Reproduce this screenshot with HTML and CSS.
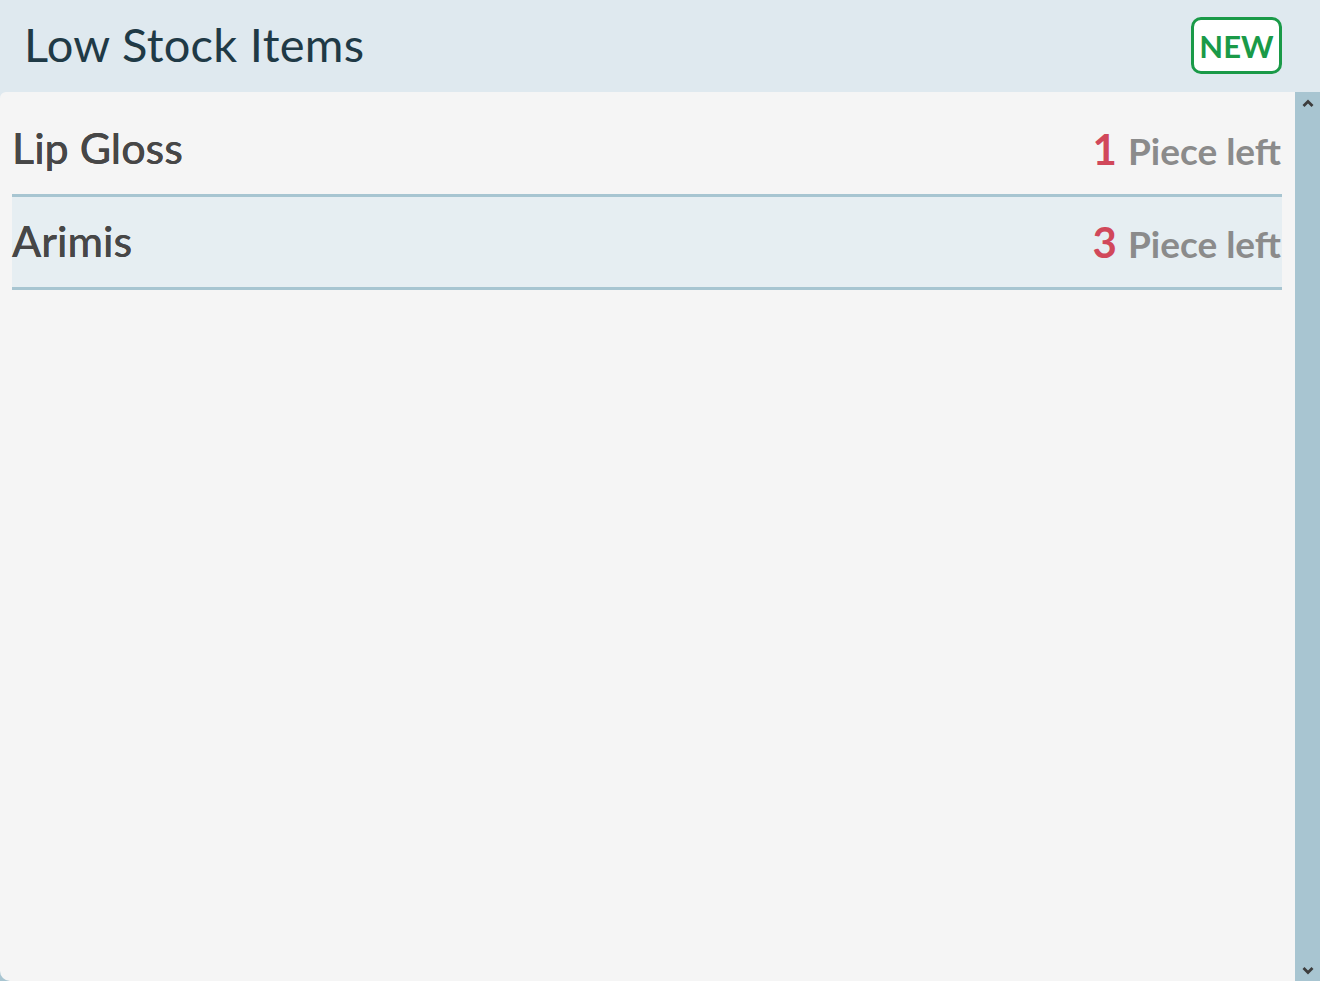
FILE: index.html
```html
<!DOCTYPE html>
<html>
<head>
<meta charset="utf-8">
<link rel="stylesheet" href="styles.css">
</head>
<body>
<div class="widget">
  <header class="head">
    <h1 class="title">Low Stock Items</h1>
    <span class="badge">NEW</span>
  </header>
  <div class="main">
    <div class="panel">
      <ul class="list">
        <li class="row">
          <span class="name">Lip Gloss</span>
          <span class="qty"><span class="num">1</span> Piece left</span>
        </li>
        <li class="row alt">
          <span class="name">Arimis</span>
          <span class="qty"><span class="num">3</span> Piece left</span>
        </li>
      </ul>
    </div>
    <div class="scroll">
      <svg class="arrow" width="12" height="8" viewBox="0 0 12 8"><path d="M1.5 7 L6 2.5 L10.5 7" fill="none" stroke="#3d3d3d" stroke-width="2.8"/></svg>
      <svg class="arrow" width="12" height="8" viewBox="0 0 12 8"><path d="M1.5 1 L6 5.5 L10.5 1" fill="none" stroke="#3d3d3d" stroke-width="2.8"/></svg>
    </div>
  </div>
</div>
</body>
</html>
```
FILE: styles.css
```css
* { box-sizing: border-box; }
html, body { margin: 0; padding: 0; height: 100%; }
body { background: #a8c5d1; font-family: "Lato", "Noto Sans", sans-serif; overflow: hidden; }
.widget { display: flex; flex-direction: column; height: 981px; width: 1320px; }
.head {
  height: 92px; background: #dfe9ef; display: flex; align-items: center;
  justify-content: space-between; padding: 0 38px 0 24px; flex-shrink: 0;
}
.title { margin: 0; font-size: 47px; font-weight: 400; color: #1f3a46; letter-spacing: 0.3px; margin-top: -4px; }
.badge {
  width: 91px; height: 57px; border: 3px solid #1a9a48; border-radius: 10px; background: #fff;
  color: #1a9a48; font-weight: 700; font-size: 31px; display: flex; align-items: center; justify-content: center;
  margin-top: -1px;
}
.main { flex: 1; display: flex; background: linear-gradient(#dfe9ef 10px, #a8c5d1 10px); }
.panel { flex: 1; background: #f5f5f5; border-radius: 6px 0 0 10px; padding: 12px 13px 0 12px; }
.list { list-style: none; margin: 0; padding: 0; }
.row {
  height: 93px; border-bottom: 3px solid #a7c5d1; display: flex; align-items: center; justify-content: space-between;
  padding: 0 1px 0 0;
}
.row.alt { background: #e6eef2; }
.name { font-size: 43px; color: #474747; font-weight: 500; margin-top: -4px; text-shadow: 0 0 0.4px #474747; }
.qty { font-size: 37px; color: #8b8b8b; font-weight: 700; }
.num { color: #d1485a; font-size: 42px; margin-right: 2px; }
.scroll { width: 25px; background: #a8c5d1; border-radius: 0 0 8px 0; display: flex; flex-direction: column; justify-content: space-between; align-items: center; padding: 7px 0 6px; }
.arrow { display: block; }
```
